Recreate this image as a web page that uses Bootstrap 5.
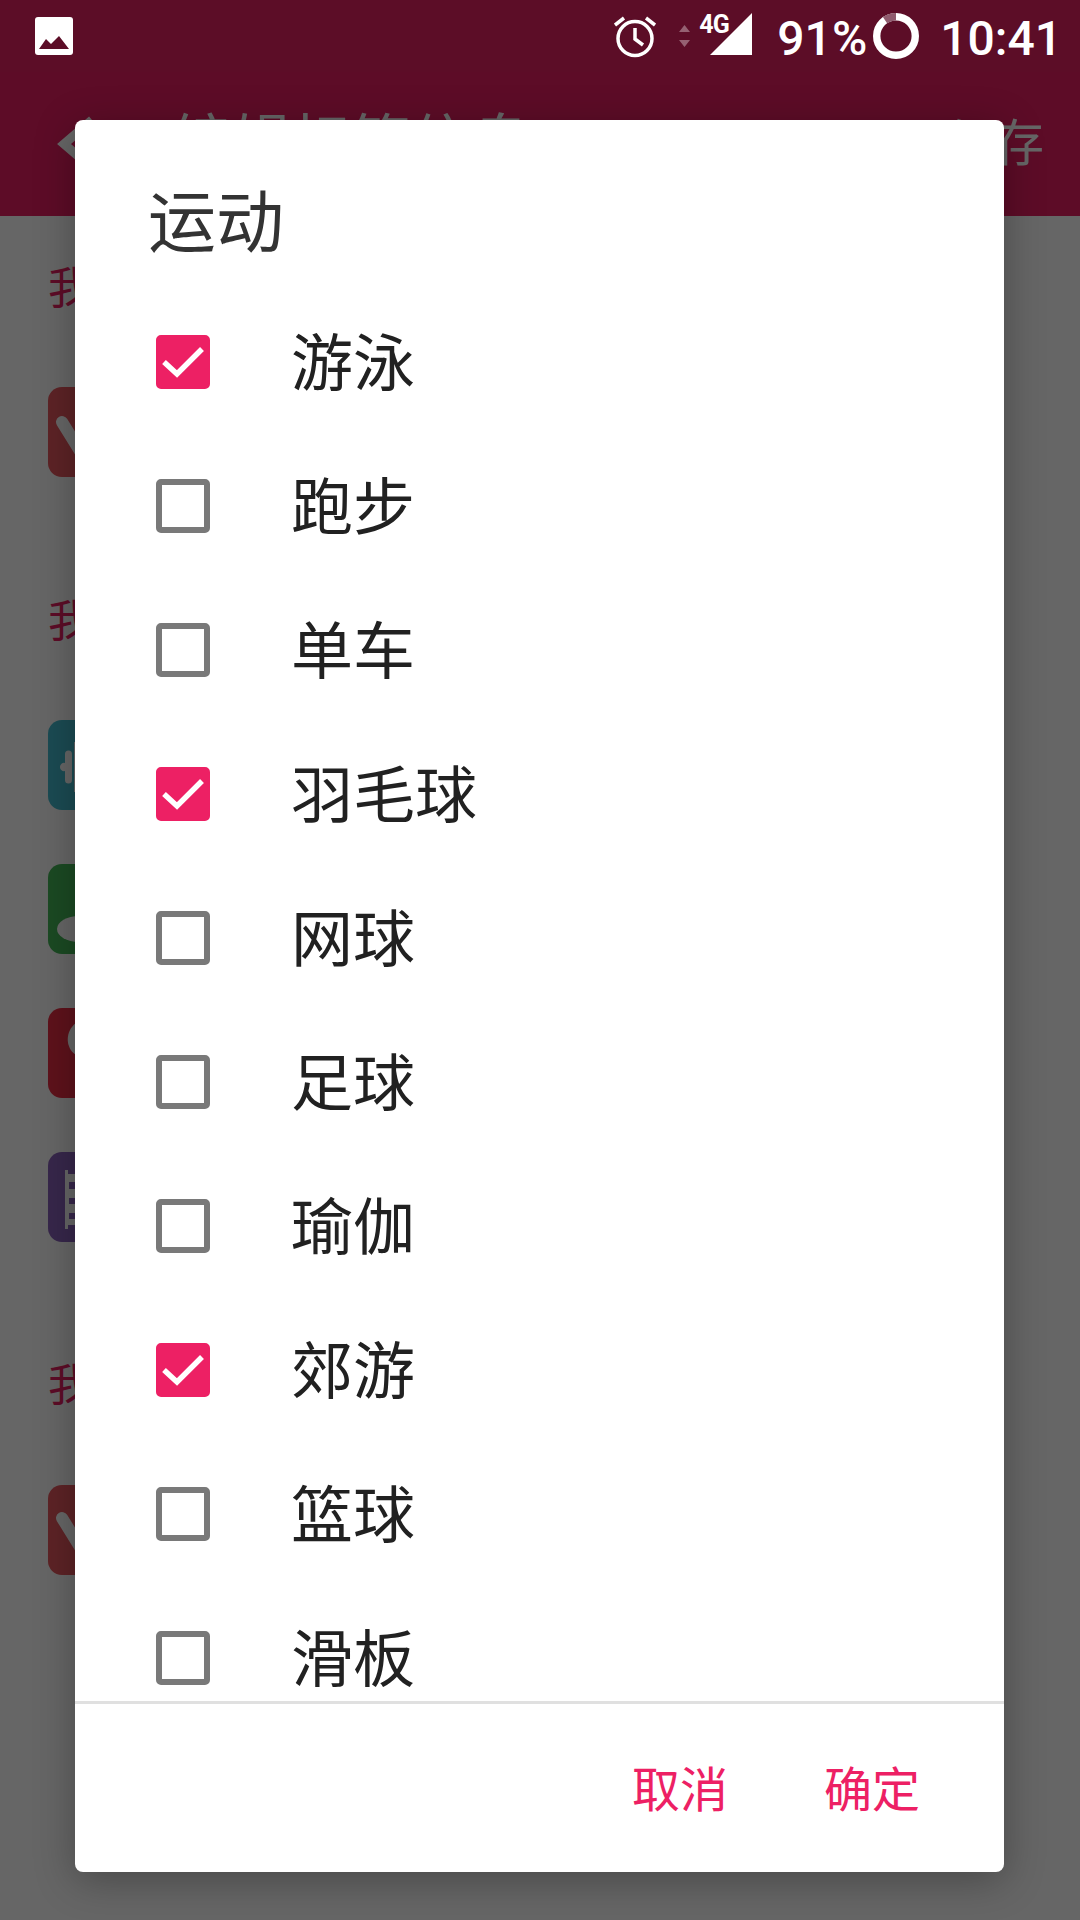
<!DOCTYPE html>
<html lang="zh-CN">
<head>
  <meta charset="UTF-8" />
  <meta name="viewport" content="width=device-width, initial-scale=1.0" />
  <title>运动</title>
  <link href="https://cdn.jsdelivr.net/npm/bootstrap@5.3.0/dist/css/bootstrap.min.css" rel="stylesheet">
  <style>
    html, body {
      width: 1080px;
      height: 1920px;
      overflow: hidden;
    }
    body {
      background: #fff;
      font-family: "Roboto", "Noto Sans CJK SC", sans-serif;
    }
    .screen {
      width: 1080px;
      height: 1920px;
      overflow: hidden;
    }

    /* page behind the dialog */
    .app-head {
      height: 216px;
      padding: 72px 36px 0 56px;
      background: #e91e63;
      color: #fff;
    }
    .app-title {
      margin-left: 65px;
      font-size: 60px;
    }
    .app-save {
      font-size: 50px;
    }
    .app-group {
      padding-left: 48px;
    }
    .group-label {
      height: 60px;
      font-size: 44px;
      line-height: 60px;
      color: #e91e63;
    }
    .app-tile {
      width: 90px;
      height: 90px;
      border-radius: 14px;
    }
    .tile-red { background: #e8585f; }
    .tile-teal { background: #45bccf; }
    .tile-green { background: #45b858; }
    .tile-crimson { background: #ec2f45; }
    .tile-purple { background: #8a62bb; }
    .gap-label { margin-top: 68px; }
    .gap-tile { margin-top: 54px; }
    .gap-group { margin-top: 115px; }

    /* scrim */
    .scrim {
      inset: 0;
      background: rgba(0, 0, 0, .6);
    }

    /* status bar */
    .status-bar {
      top: 0;
      left: 0;
      width: 1080px;
      height: 72px;
      padding: 0 18px 0 35px;
      color: #fff;
      background: #5c0d27;
      font-size: 48px;
      font-weight: 500;
      line-height: 72px;
    }
    .status-text {
      padding-top: 5px;
    }
    .status-arrows {
      margin-left: 23px;
    }
    .status-net {
      width: 42px;
      height: 42px;
      margin: 0 25px 4px 20px;
    }
    .status-4g {
      top: 1px;
      left: -11px;
      font-size: 25px;
      font-weight: 700;
      line-height: 22px;
      letter-spacing: -1px;
    }
    .status-ring {
      margin: 0 21px 0 6px;
    }

    /* dialog */
    .pick-dialog {
      top: 120px;
      left: 75px;
      width: 929px;
      height: 1752px;
      background: #fff;
      border-radius: 8px;
      box-shadow: 0 8px 40px rgba(0, 0, 0, .3);
      overflow: hidden;
    }
    .pick-title {
      height: 170px;
      padding: 54px 0 0 73px;
      font-size: 68px;
      line-height: 100px;
      color: #333;
    }
    .pick-list {
      height: 1411px;
      overflow: hidden;
      padding-left: 81px;
    }
    .pick-row {
      height: 144px;
      color: #212121;
      font-size: 62px;
    }
    .pick-name {
      padding-top: 4px;
    }
    .pick-box {
      width: 54px;
      height: 54px;
      flex: none;
      border: 6px solid #797979;
      border-radius: 5px;
      margin-right: 81px;
    }
    .pick-box.is-on {
      background: #ed2064;
      border-color: #ed2064;
    }
    .pick-foot {
      height: 171px;
      border-top: 3px solid #e0e0e0;
      padding: 5px 84px 0 0;
      gap: 96px;
      color: #ed2064;
      font-size: 48px;
    }
  </style>
</head>
<body>
  <div class="screen position-relative">

    <!-- page under the dialog -->
    <div class="app-head d-flex align-items-center justify-content-between">
      <div class="d-flex align-items-center">
        <svg width="50" height="76" viewBox="0 0 50 76"><path d="M36 14 8 38l28 24" fill="none" stroke="#fff" stroke-width="9"/></svg>
        <span class="app-title">编辑标签信息</span>
      </div>
      <span class="app-save">保存</span>
    </div>
    <div class="app-group">
      <div class="group-label" style="margin-top:43px">我的运动</div>
      <div class="app-tile tile-red gap-label">
        <svg width="90" height="90" viewBox="0 0 90 90"><path d="M14 35 45 85" fill="none" stroke="#fff" stroke-width="12" stroke-linecap="round"/></svg>
      </div>
      <div class="group-label gap-group">我的爱好</div>
      <div class="app-tile tile-teal gap-label">
        <svg width="90" height="90" viewBox="0 0 90 90"><path d="M12 47a4 4 0 0 1 5-4V34a3.500 3.500 0 0 1 7 0v26a3.500 3.500 0 0 1-7 0v-9a4 4 0 0 1-5-4zM26 22h12v50H26z" fill="#fff"/></svg>
      </div>
      <div class="app-tile tile-green gap-tile">
        <svg width="90" height="90" viewBox="0 0 90 90"><ellipse cx="31" cy="65" rx="22" ry="13" fill="#fff"/></svg>
      </div>
      <div class="app-tile tile-crimson gap-tile">
        <svg width="90" height="90" viewBox="0 0 90 90"><path d="M28 15C17 23 17 40 28 47z" fill="#fff"/></svg>
      </div>
      <div class="app-tile tile-purple gap-tile">
        <svg width="90" height="90" viewBox="0 0 90 90"><path d="M17 18h3v4h20v51H20v4h-3z" fill="#fff"/><path d="M21 30h8v7h-8zM21 46h8v6h-8zM21 61h8v6h-8z" fill="#8a62bb"/></svg>
      </div>
      <div class="group-label" style="margin-top:114px">我的习惯</div>
      <div class="app-tile tile-red" style="margin-top:69px">
        <svg width="90" height="90" viewBox="0 0 90 90"><path d="M14 33 45 83" fill="none" stroke="#fff" stroke-width="12" stroke-linecap="round"/></svg>
      </div>
    </div>

    <div class="scrim position-absolute"></div>

    <!-- status bar -->
    <div class="status-bar position-absolute d-flex align-items-center justify-content-between">
      <svg width="38" height="38" viewBox="0 0 38 38"><rect width="38" height="38" rx="3" fill="#fff"/><path d="M4 32 11 22l5 5 8-8 10 13z" fill="#5c0d27"/></svg>
      <div class="d-flex align-items-center">
        <svg width="42" height="44" viewBox="0 0 42 44"><circle cx="21" cy="24.500" r="17" fill="none" stroke="#fff" stroke-width="3.500"/><path d="M21 14v11l8 6M1 11l9-7M41 11l-9-7" fill="none" stroke="#fff" stroke-width="3.500"/></svg>
        <svg class="status-arrows" width="11" height="22" viewBox="0 0 11 22"><path d="M5.500 0 11 7H0zM5.500 22 11 15H0z" fill="#fff" fill-opacity=".35"/></svg>
        <div class="status-net position-relative">
          <span class="status-4g position-absolute">4G</span>
          <svg class="d-block" width="42" height="42" viewBox="0 0 42 42"><path d="M42 0v42H0z" fill="#fff"/></svg>
        </div>
        <span class="status-text">91%</span>
        <svg class="status-ring" width="46" height="46" viewBox="0 0 46 46">
          <circle cx="23" cy="23" r="19.300" fill="none" stroke="#fff" stroke-width="7.400"/>
          <path d="M23 3.700A19.300 19.300 0 0 0 12 7.100" fill="none" stroke="#8f5b6e" stroke-width="7.400"/>
        </svg>
        <span class="status-text">10:41</span>
      </div>
    </div>

    <!-- dialog -->
    <div class="pick-dialog position-absolute">
      <div class="pick-title">运动</div>
      <div class="pick-list" id="pickList"></div>
      <div class="pick-foot d-flex align-items-center justify-content-end">
        <span>取消</span>
        <span>确定</span>
      </div>
    </div>
  </div>

  <script src="https://cdn.jsdelivr.net/npm/bootstrap@5.3.0/dist/js/bootstrap.bundle.min.js"></script>
  <script>
    const items = [
      ['游泳', true], ['跑步', false], ['单车', false], ['羽毛球', true], ['网球', false],
      ['足球', false], ['瑜伽', false], ['郊游', true], ['篮球', false], ['滑板', false]
    ];
    const tick = '<svg class="d-block" width="42" height="42" viewBox="0 0 42 42"><path d="M2 21l13 12L40 8" fill="none" stroke="#fff" stroke-width="5.500"/></svg>';
    document.getElementById('pickList').innerHTML = items.map(([name, on]) => `
      <div class="pick-row d-flex align-items-center">
        <div class="pick-box ${on ? 'is-on' : ''}">${on ? tick : ''}</div>
        <span class="pick-name">${name}</span>
      </div>`).join('');
  </script>
</body>
</html>
